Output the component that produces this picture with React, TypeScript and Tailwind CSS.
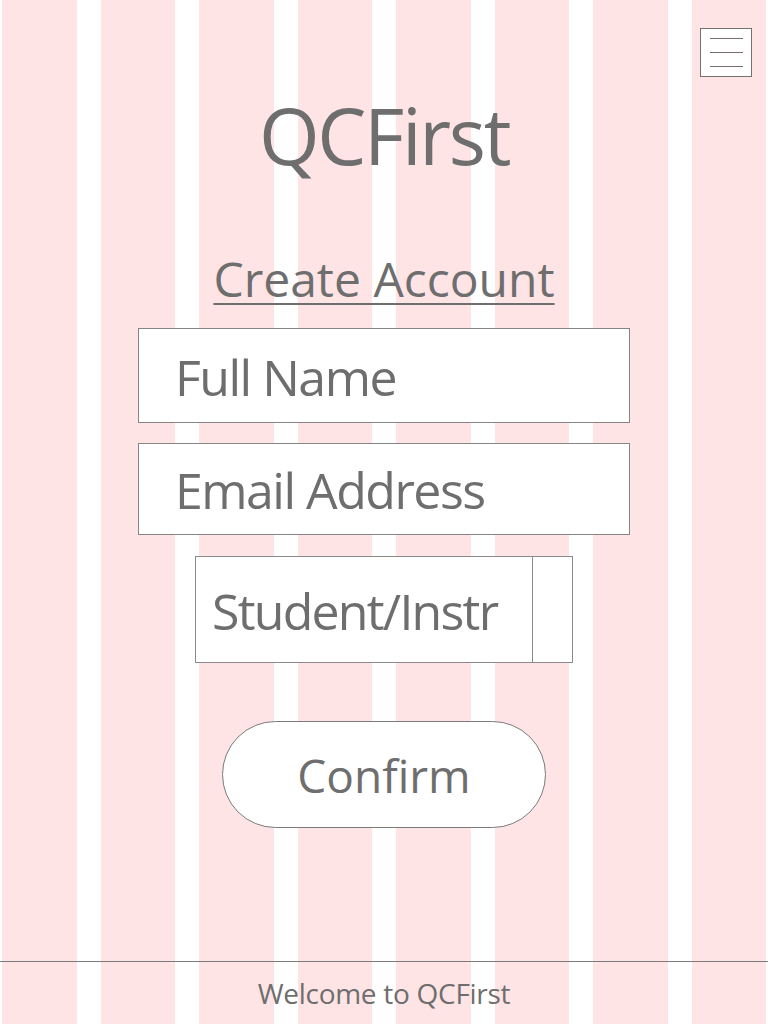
import React from 'react';

const font = { fontFamily: '"Open Sans", "Noto Sans", Arial, sans-serif' };

const Stripes: React.FC = () => (
  <div className="pointer-events-none absolute inset-0 grid grid-cols-8 gap-6 px-[2px]">
    {Array.from({ length: 8 }).map((_, i) => (
      <div key={i} className="bg-[#ffe4e6]" />
    ))}
  </div>
);

const MenuButton: React.FC = () => (
  <button className="flex h-[49px] w-[52px] flex-col items-center justify-center gap-[13px] border border-[#776e6e] bg-white">
    <span className="block h-px w-[33px] bg-[#776e6e]" />
    <span className="block h-px w-[33px] bg-[#776e6e]" />
    <span className="block h-px w-[33px] bg-[#776e6e]" />
  </button>
);

const Field: React.FC<{ label: string; height: string }> = ({ label, height }) => (
  <div className={`flex w-[492px] items-center border border-[#858585] bg-white pl-[36px] ${height}`}>
    <span className="pt-[2px] text-[50px] leading-none tracking-[-0.03em] text-[#6e6e6e]">{label}</span>
  </div>
);

export default function App() {
  return (
    <div className="relative h-[1024px] w-full overflow-hidden bg-white" style={font}>
      <Stripes />

      <div className="relative flex h-full flex-col">
        <header className="flex justify-end pr-4 pt-[28px]">
          <MenuButton />
        </header>

        <main className="flex flex-1 flex-col items-center">
          <h1 className="mt-[19px] text-[78px] font-normal leading-none tracking-[-0.03em] text-[#6e6e6e]">
            QCFirst
          </h1>

          <h2 className="mt-[81px] text-[48px] leading-none text-[#6e6e6e] underline decoration-2 underline-offset-[6px]">
            Create Account
          </h2>

          <div className="mt-[25px] flex flex-col items-center gap-5">
            <Field label="Full Name" height="h-[95px]" />
            <Field label="Email Address" height="h-[92px]" />
          </div>

          <div className="mt-[21px] flex h-[107px] w-[378px] border border-[#8a8a8a] bg-white">
            <div className="flex flex-1 items-center overflow-hidden pl-[16px]">
              <span className="whitespace-nowrap pt-[2px] text-[50px] leading-none tracking-[-0.035em] text-[#6e6e6e]">
                Student/Instr
              </span>
            </div>
            <div className="w-[40px] border-l border-[#8a8a8a]" />
          </div>

          <button className="mt-[58px] flex h-[107px] w-[324px] items-center justify-center rounded-full border border-[#7a7a7a] bg-white">
            <span className="text-[46px] leading-none text-[#6e6e6e]">Confirm</span>
          </button>
        </main>

        <footer className="flex h-[63px] items-center justify-center border-t border-[#7a7a7a]">
          <span className="text-[28px] leading-none tracking-[-0.01em] text-[#6e6e6e]">Welcome to QCFirst</span>
        </footer>
      </div>
    </div>
  );
}
